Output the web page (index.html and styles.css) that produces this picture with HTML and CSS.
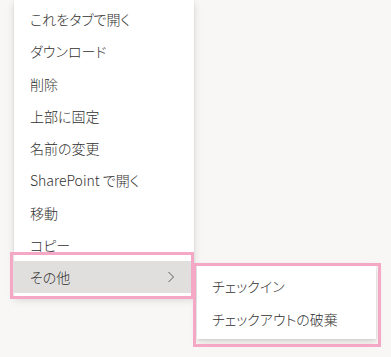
FILE: index.html
```html
<!DOCTYPE html>
<html lang="ja">
<head>
    <meta charset="UTF-8">
    <title>コンテキストメニュー</title>
    <link rel="stylesheet" href="styles.css">
</head>
<body>
    <div class="page">
        <ul class="menu">
            <li class="menu-item">これをタブで開く</li>
            <li class="menu-item">ダウンロード</li>
            <li class="menu-item">削除</li>
            <li class="menu-item">上部に固定</li>
            <li class="menu-item">名前の変更</li>
            <li class="menu-item">SharePoint で開く</li>
            <li class="menu-item">移動</li>
            <li class="menu-item">コピー</li>
            <li class="menu-item menu-item-active">
                <span>その他</span>
                <svg class="chevron" width="8" height="12" viewBox="0 0 8 12">
                    <path d="M1.5 1 L6.5 6 L1.5 11" fill="none" stroke="#605e5c" stroke-width="1"/>
                </svg>
                <ul class="submenu">
                    <li class="menu-item">チェックイン</li>
                    <li class="menu-item">チェックアウトの破棄</li>
                </ul>
                <div class="mark mark-main"></div>
                <div class="mark mark-sub"></div>
            </li>
        </ul>
    </div>
</body>
</html>
```

FILE: styles.css
```css
/* Basic Reset */
* {
    margin: 0;
    padding: 0;
    box-sizing: border-box;
}

body {
    font-family: "Noto Sans CJK JP", "Noto Sans", sans-serif;
    font-size: 14px;
    font-weight: 300;
    font-feature-settings: "palt";
    background-color: #f8f7f6;
    color: #323130;
    height: 357px;
    overflow: hidden;
}

.page {
    padding-left: 14px;
}

.menu {
    list-style: none;
    width: 180px;
    background-color: #ffffff;
    padding: 3px 0 4px;
    box-shadow: 0 3px 8px rgba(0, 0, 0, 0.13), 0 1px 2px rgba(0, 0, 0, 0.08);
}

.menu-item {
    position: relative;
    height: 32.25px;
    display: flex;
    align-items: center;
    justify-content: space-between;
    padding: 0 16px;
    white-space: nowrap;
}

.menu-item-active {
    background-color: #e1dfdd;
}

.chevron {
    margin-right: 3px;
}

.submenu {
    list-style: none;
    position: absolute;
    left: 183px;
    top: 4px;
    width: 179px;
    background-color: #ffffff;
    padding: 4px 0;
    box-shadow: 0 3px 8px rgba(0, 0, 0, 0.13), 0 1px 2px rgba(0, 0, 0, 0.08);
}

.submenu .menu-item {
    height: 33px;
    padding: 0 15px;
}

/* pink highlight frames */
.mark {
    position: absolute;
    border: 3px solid #f5a8c6;
    pointer-events: none;
}

.mark-main {
    left: -4px;
    top: -9px;
    width: 184px;
    height: 47px;
}

.mark-sub {
    left: 179px;
    top: 2px;
    width: 188px;
    height: 84px;
}
```
